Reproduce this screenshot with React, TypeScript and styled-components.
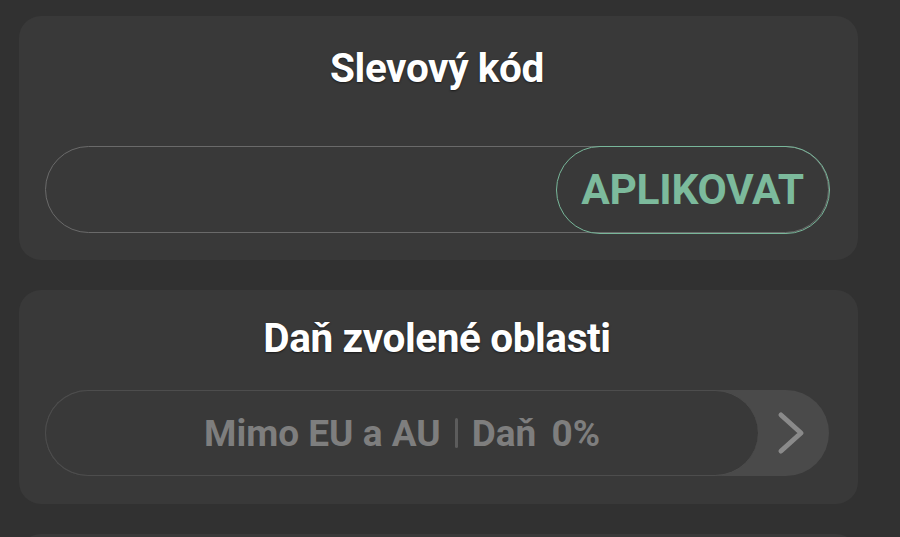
import React from "react";
import styled, { createGlobalStyle } from "styled-components";

const Global = createGlobalStyle`
  html, body { margin: 0; padding: 0; background: #313131; overflow: hidden; }
  body { font-family: Roboto, "Liberation Sans", sans-serif; }
`;

const Page = styled.div`
  display: flex;
  flex-direction: column;
  gap: 30px;
  padding: 16px 42px 0 19px;
  height: 537px;
  box-sizing: border-box;
`;

const Card = styled.section<{ $top: number; $gap: number; $bottom: number }>`
  background: #393939;
  border-radius: 22px;
  padding: ${(p) => p.$top}px 29px ${(p) => p.$bottom}px 26px;
  display: flex;
  flex-direction: column;
  gap: ${(p) => p.$gap}px;
  flex-shrink: 0;
`;

const Title = styled.h2`
  margin: 0;
  font-size: 40.5px;
  line-height: 48px;
  font-weight: 700;
  color: #ffffff;
  text-align: center;
  letter-spacing: -0.4px;
  text-shadow: 0 1px 2px rgba(0, 0, 0, 0.55);
`;

const CodeField = styled.div`
  display: flex;
  height: 87px;
  border: 1.5px solid #6a6a6a;
  border-radius: 44px;
  box-sizing: border-box;
`;

const CodeInput = styled.input`
  flex: 1;
  min-width: 0;
  background: transparent;
  border: none;
  outline: none;
  color: #fff;
  font: inherit;
  font-size: 32px;
  padding: 0 40px;
`;

const ApplyButton = styled.button`
  width: 274px;
  margin: -1.5px -1.5px -1.5px 0;
  border: 1.5px solid #78b79a;
  border-radius: 44px;
  background: transparent;
  color: #7cba9c;
  font-family: Roboto, "Liberation Sans", sans-serif;
  font-size: 42.5px;
  font-weight: 700;
  letter-spacing: -0.3px;
  padding: 0;
  cursor: pointer;
`;

const Select = styled.div`
  display: flex;
  height: 86px;
  background: #4a4a4a;
  border-radius: 43px;
`;

const SelectValue = styled.div`
  flex: 1;
  display: flex;
  align-items: center;
  justify-content: center;
  gap: 14px;
  background: #393939;
  border: 1.5px solid #4d4d4d;
  border-right: none;
  border-radius: 43px;
  box-sizing: border-box;
  color: #7e7e7e;
  font-size: 37px;
  font-weight: 700;
  letter-spacing: 0;
`;

const Divider = styled.span`
  width: 3px;
  height: 30px;
  background: #5c5c5c;
  border-radius: 2px;
`;

const Tax = styled.span`
  word-spacing: 6px;
`;

const Arrow = styled.div`
  width: 71px;
  display: flex;
  align-items: center;
  justify-content: flex-start;
  padding-left: 18px;
  box-sizing: border-box;
`;

const Filler = styled.div`
  height: 200px;
`;

export default function App() {
  return (
    <>
      <Global />
      <Page>
        <Card $top={28} $gap={54} $bottom={27}>
          <Title>Slevový kód</Title>
          <CodeField>
            <CodeInput aria-label="Slevový kód" />
            <ApplyButton>APLIKOVAT</ApplyButton>
          </CodeField>
        </Card>
        <Card $top={24} $gap={28} $bottom={28}>
          <Title>Daň zvolené oblasti</Title>
          <Select>
            <SelectValue>
              <span>Mimo EU a AU</span>
              <Divider />
              <Tax>Daň 0%</Tax>
            </SelectValue>
            <Arrow>
              <svg width="30" height="46" viewBox="0 0 30 46">
                <path
                  d="M5 5 L25 23 L5 41"
                  fill="none"
                  stroke="#8a8a8a"
                  strokeWidth="5"
                  strokeLinecap="round"
                  strokeLinejoin="round"
                />
              </svg>
            </Arrow>
          </Select>
        </Card>
        <Card $top={24} $gap={28} $bottom={28}>
          <Filler />
        </Card>
      </Page>
    </>
  );
}
